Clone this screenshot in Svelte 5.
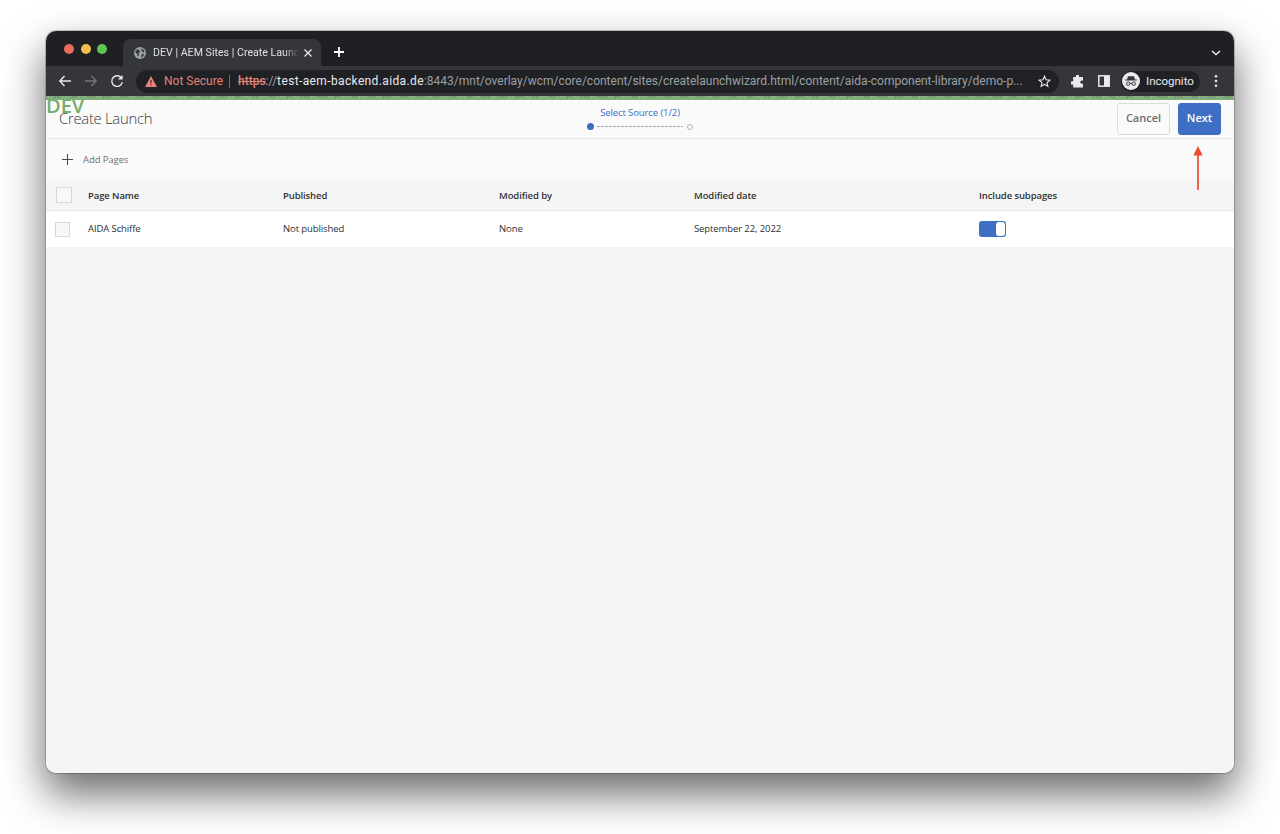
<script>
  const cols = ['Page Name', 'Published', 'Modified by', 'Modified date', 'Include subpages'];
</script>

<div class="window">
  <div class="tabstrip">
    <div class="lights"><i class="r"></i><i class="y"></i><i class="g"></i></div>
    <div class="tab">
      <svg class="globe" width="12" height="12" viewBox="0 0 16 16"><circle cx="8" cy="8" r="8" fill="#9aa0a6"/><path d="M2 5l3-2 2 1 1 3-2 1 1 3-2 1-1-3-2-2zM10 2l3 2 1 3-2 0-2-2zM10 10l3-1 0 2-2 3-1-1z" fill="#35363a"/></svg>
      <span class="tabtitle">DEV | AEM Sites | Create Launc</span>
      <svg class="close" width="10" height="10" viewBox="0 0 10 10"><path d="M1.5 1.5l7 7M8.5 1.5l-7 7" stroke="#e8eaed" stroke-width="1.3"/></svg>
    </div>
    <svg class="plus" width="12" height="12" viewBox="0 0 12 12"><path d="M6 1v10M1 6h10" stroke="#fff" stroke-width="1.8"/></svg>
    <svg class="chev" width="10" height="6" viewBox="0 0 10 6"><path d="M1 1l4 3.6L9 1" stroke="#e8eaed" stroke-width="1.4" fill="none"/></svg>
  </div>
  <div class="toolbar">
    <svg width="14" height="14" viewBox="0 0 14 14"><path d="M13 7H2M6.5 2L1.8 7l4.7 5" stroke="#e8eaed" stroke-width="1.4" fill="none"/></svg>
    <svg width="14" height="14" viewBox="0 0 14 14"><path d="M1 7h11M7.5 2l4.7 5-4.7 5" stroke="#74777b" stroke-width="1.4" fill="none"/></svg>
    <svg width="14" height="14" viewBox="0 0 14 14"><path d="M11.6 4.3A5.3 5.3 0 1 0 12.3 8" stroke="#e8eaed" stroke-width="1.4" fill="none"/><path d="M12.6 1v4.6H8z" fill="#e8eaed"/></svg>
    <div class="omni">
      <svg width="12" height="11" viewBox="0 0 12 11"><path d="M6 0l6 11H0z" fill="#e8847c"/><path d="M6 4v3.6M6 8.4v1.2" stroke="#292a2d" stroke-width="1.1"/></svg>
      <span class="ns">Not Secure</span>
      <span class="sep"></span>
      <span class="url"><s>https</s><span class="dim">://</span><span class="host">test-aem-backend.aida.de</span><span class="dim rest">:8443/mnt/overlay/wcm/core/content/sites/createlaunchwizard.html/content/aida-component-library/demo-p...</span></span>
      <svg class="star" width="13" height="13" viewBox="0 0 14 14"><path d="M7 1.3l1.7 3.8 4.1.4-3.1 2.7.9 4L7 10.1l-3.6 2.1.9-4-3.1-2.7 4.1-.4z" stroke="#e8eaed" stroke-width="1.2" fill="none"/></svg>
    </div>
    <svg class="ext" width="13" height="13" viewBox="0 0 13 13"><path d="M5 0.5a1.6 1.6 0 0 1 3 0V2h4v3.5h-1.2a1.6 1.6 0 0 0 0 3.2H12V12.5H2.2V9.4H1a1.6 1.6 0 0 1 0-3.2h1.2V2H5z" fill="#e8eaed"/></svg>
    <svg class="panel" width="12" height="12" viewBox="0 0 12 12"><rect x=".8" y=".8" width="10.4" height="10.4" fill="none" stroke="#e8eaed" stroke-width="1.5"/><rect x="6" y="1" width="5" height="10" fill="#e8eaed"/></svg>
    <div class="incog">
      <svg width="18" height="18" viewBox="0 0 18 18"><circle cx="9" cy="9" r="9" fill="#e8eaed"/><path d="M6 4.2h6l1 3.3h1.8v.9H3.2v-.9H5z" fill="#35363a"/><circle cx="6.2" cy="11.6" r="1.7" fill="none" stroke="#35363a"/><circle cx="11.8" cy="11.6" r="1.7" fill="none" stroke="#35363a"/><path d="M7.9 11.4h2.2" stroke="#35363a"/></svg>
      <span>Incognito</span>
    </div>
    <svg class="dots" width="4" height="14" viewBox="0 0 4 14"><circle cx="2" cy="2.2" r="1.3" fill="#e8eaed"/><circle cx="2" cy="7" r="1.3" fill="#e8eaed"/><circle cx="2" cy="11.8" r="1.3" fill="#e8eaed"/></svg>
  </div>
  <div class="strip"></div>

  <div class="page">
    <div class="dev">DEV</div>
    <header class="head">
      <h1>Create Launch</h1>
      <div class="steps">
        <div class="steplabel">Select Source (1/2)</div>
        <div class="track"><i class="on"></i><b></b><i class="off"></i></div>
      </div>
      <div class="actions">
        <button class="cancel">Cancel</button>
        <button class="next">Next</button>
      </div>
    </header>

    <div class="add">
      <svg width="11" height="11" viewBox="0 0 11 11"><path d="M5.5 0v11M0 5.5h11" stroke="#4b4b4b" stroke-width="1.1"/></svg>
      <span>Add Pages</span>
    </div>

    <div class="row thead">
      <span class="check large"></span>
      {#each cols as c}<span class="cell">{c}</span>{/each}
    </div>
    <div class="row tbody">
      <span class="check"></span>
      <span class="cell">AIDA Schiffe</span>
      <span class="cell">Not published</span>
      <span class="cell">None</span>
      <span class="cell">September 22, 2022</span>
      <span class="cell"><span class="toggle"><i></i></span></span>
    </div>

    <svg class="arrow" width="10" height="44" viewBox="0 0 10 44"><path d="M5 0l4.6 9.5H.4z" fill="#ee4a2e"/><path d="M5 8v36" stroke="#ee4a2e" stroke-width="1.7"/></svg>
  </div>
</div>

<style>
  :global(body) { margin: 0; background: #fff; height: 834px; overflow: hidden; }
  .window {
    position: relative;
    width: 1188px;
    height: 742px;
    margin: 31px 46px 0;
    border-radius: 10px;
    overflow: hidden;
    display: flex;
    flex-direction: column;
    font-family: "Open Sans", sans-serif;
    box-sizing: border-box;
    box-shadow: 0 0 0 1px rgba(0,0,0,.2), 0 20px 42px 1px rgba(0,0,0,.58);
  }
  .tabstrip {
    height: 35px;
    flex: none;
    background: #1f2023;
    display: flex;
    align-items: flex-end;
    position: relative;
    font-family: Roboto, sans-serif;
  }
  .lights { position: absolute; left: 18px; top: 13px; display: flex; gap: 6.5px; }
  .lights i { width: 10px; height: 10px; border-radius: 50%; display: block; }
  .r { background: #ed6a5e; }
  .y { background: #f5bf4f; }
  .g { background: #61c554; }
  .tab {
    margin-left: 77px;
    width: 198px;
    height: 27px;
    background: #35363a;
    border-radius: 8px 8px 0 0;
    display: flex;
    align-items: center;
    box-sizing: border-box;
    padding-left: 11px;
    position: relative;
  }
  .tabtitle {
    margin-left: 7px;
    font-size: 10.6px;
    letter-spacing: 0.02px;
    color: #dfe1e5;
    white-space: nowrap;
    mask-image: linear-gradient(90deg, #000 90%, transparent 100%);
  }
  .close { position: absolute; left: 180px; top: 9px; }
  .plus { margin: 0 0 8px 12px; }
  .chev { position: absolute; right: 13px; top: 19px; }
  .toolbar {
    height: 30px;
    flex: none;
    background: #35363a;
    display: flex;
    align-items: center;
    padding-left: 12px;
    gap: 12px;
    box-sizing: border-box;
    font-family: Roboto, sans-serif;
  }
  .omni {
    width: 923px;
    height: 23px;
    border-radius: 12px;
    background: #202124;
    display: flex;
    align-items: center;
    padding-left: 9px;
    box-sizing: border-box;
    font-size: 12px;
    position: relative;
    flex: none;
  }
  .ns { color: #e0837b; margin-left: 7px; }
  .sep { width: 1px; height: 13px; background: #6b6d70; margin: 0 8px 0 6px; }
  .url { white-space: nowrap; }
  s { color: #e0837b; font-weight: 500; }
  .dim { color: #9aa0a6; }
  .host { color: #e8eaed; letter-spacing: 0.37px; }
  .rest { letter-spacing: 0; }
  .star { position: absolute; right: 8px; top: 5px; }
  .ext { flex: none; }
  .panel { flex: none; margin-left: 2px; }
  .incog {
    flex: none;
    width: 79px;
    height: 21px;
    margin-left: -1px;
    border-radius: 11px;
    background: #202124;
    display: flex;
    align-items: center;
    padding-left: 1px;
    gap: 6px;
    box-sizing: border-box;
    font-size: 11.5px;
    color: #e8eaed;
  }
  .dots { flex: none; margin-left: 2px; }
  .strip {
    height: 4px;
    flex: none;
    background:
      repeating-linear-gradient(135deg, #94bd8f 0 1px, #6f8f6a 1px 2px) top / 100% 2px no-repeat,
      #7fb078;
    position: relative;
    z-index: 1;
  }
  .page {
    flex: 1;
    position: relative;
    background: #f5f5f5;
    display: flex;
    flex-direction: column;
    color: #2c2c2c;
    overflow: hidden;
  }
  .dev {
    position: absolute;
    left: 0;
    top: -4px;
    font: 600 20px/1 "Open Sans", sans-serif;
    color: #76ad6e;
    z-index: 1;
  }
  .head {
    height: 38px;
    flex: none;
    background: #fafafa;
    border-bottom: 1px solid #e8e8e8;
    display: grid;
    grid-template-columns: 1fr auto 1fr;
    align-items: center;
    padding: 0 13px;
  }
  h1 { margin: 0 0 2px; font-size: 14.9px; font-weight: 300; letter-spacing: -0.3px; color: #3a3a3a; position: relative; z-index: 2; }
  .steps { display: flex; flex-direction: column; align-items: center; margin-top: 1px; }
  .steplabel { font-size: 9.5px; color: #3a6cc2; line-height: 14px; letter-spacing: -0.1px; margin-top: -3px; }
  .track { display: flex; align-items: center; margin-top: 3px; }
  .track .on { width: 7px; height: 7px; border-radius: 50%; background: #3a6cc2; }
  .track b { width: 86px; margin: 0 4px 0 3px; height: 1px; background: repeating-linear-gradient(90deg, #a8a8a8 0 3px, transparent 3px 4px); }
  .track .off { width: 4px; height: 4px; border-radius: 50%; border: 1px solid #b0b0b0; }
  .actions { display: flex; justify-content: flex-end; gap: 8px; margin-top: -1px; }
  button {
    height: 32px;
    border-radius: 3px;
    font: 600 11px/28px "Open Sans", sans-serif;
    padding: 0 0 2px;
    box-sizing: border-box;
  }
  .cancel { width: 53px; background: #fafafa; border: 1px solid #dcdcdc; color: #6e6e6e; }
  .next { width: 43px; background: #3e6fc4; border: 1px solid #3e6fc4; color: #fff; }
  .add {
    height: 41px;
    flex: none;
    background: #fafafa;
    display: flex;
    align-items: center;
    padding-left: 16px;
    gap: 10px;
    font-size: 9.4px;
    color: #707070;
  }
  .row {
    display: grid;
    grid-template-columns: 42px 195px 216px 195px 285px 1fr;
    align-items: center;
    flex: none;
    font-size: 9.5px;
    letter-spacing: -0.1px;
  }
  .thead { height: 31px; background: #f5f5f5; border-bottom: 1px solid #e6e6e6; font-weight: 600; box-sizing: border-box; color: #333; }
  .tbody { height: 36px; background: #fff; color: #2f2f2f; padding-bottom: 2px; box-sizing: border-box; }
  .check { width: 13px; height: 13px; border: 1px solid #d8d8d8; background: #f7f7f7; margin-left: 9px; display: block; margin-top: 2px; }
  .check.large { width: 14px; height: 14px; margin-left: 10px; background: #f8f8f8; margin-top: 0; }
  .toggle {
    display: block;
    width: 27px;
    height: 16px;
    border-radius: 3px;
    background: #3e6fc4;
    position: relative;
    margin-top: 1px;
  }
  .toggle i {
    position: absolute;
    right: 1px;
    top: 1px;
    width: 9px;
    height: 14px;
    background: #fff;
    border-radius: 3px;
  }
  .arrow { position: absolute; left: 1147px; top: 46px; }
</style>
